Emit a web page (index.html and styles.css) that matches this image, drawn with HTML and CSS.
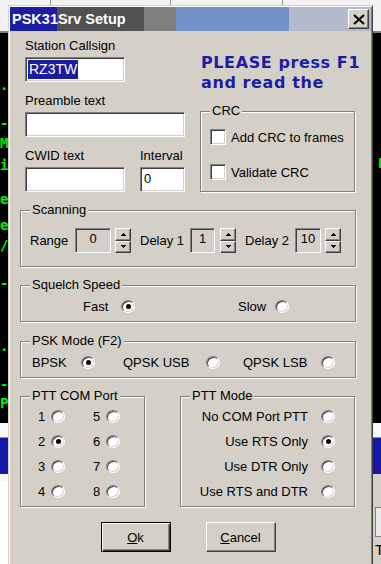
FILE: index.html
```html
<!DOCTYPE html>
<html lang="en">
<head>
  <meta charset="UTF-8">
  <meta name="viewport" content="width=device-width, initial-scale=1.0">
  <title>PSK31Srv Setup</title>
  <link rel="stylesheet" href="styles.css">
</head>
<body>
  <div class="desk">
    <div class="backdrop">
      <div class="toolbar">
        <span class="tool tool-a"></span>
        <span class="tool tool-b"></span>
        <span class="tool tool-c"></span>
      </div>
      <div class="terminal">
        <span class="glyph g1">.</span>
        <span class="glyph g2">-</span>
        <span class="glyph g3">M</span>
        <span class="glyph g4">i</span>
        <span class="glyph g5">e</span>
        <span class="glyph g6">e</span>
        <span class="glyph g7">/</span>
        <span class="glyph g8">-</span>
        <span class="glyph g9">.</span>
        <span class="glyph g10">-</span>
        <span class="glyph g11">P</span>
        <span class="glyph g12">E</span>
      </div>
      <div class="status"></div>
      <div class="band"></div>
      <div class="lower">
        <div class="lower-left"></div>
        <div class="lower-right">
          <div class="lower-box"></div>
          <div class="lower-text">T</div>
        </div>
      </div>
    </div>

    <div class="dialog">
      <div class="titlebar">
        <span class="title">PSK31Srv Setup</span>
        <button class="close-btn">
          <svg width="12" height="11" viewBox="0 0 12 11"><path d="M1 1 L11 10 M11 1 L1 10" stroke="#000" stroke-width="2"/></svg>
        </button>
      </div>

      <div class="dialog-body">
        <div class="top">
          <div class="fields">
            <div class="field">
              <label>Station Callsign</label>
              <div class="edit edit-call"><span class="sel">RZ3TW</span></div>
            </div>
            <div class="field">
              <label>Preamble text</label>
              <div class="edit edit-wide"></div>
            </div>
            <div class="field-row">
              <div class="field">
                <label>CWID text</label>
                <div class="edit edit-call"></div>
              </div>
              <div class="field">
                <label>Interval</label>
                <div class="edit edit-small">0</div>
              </div>
            </div>
          </div>

          <div class="side">
            <div class="notice">PLEASE press F1<br>and read the<br>help file</div>
            <div class="group group-crc">
              <span class="legend">CRC</span>
              <div class="check-row"><span class="checkbox"></span>Add CRC to frames</div>
              <div class="check-row"><span class="checkbox"></span>Validate CRC</div>
            </div>
          </div>
        </div>

        <div class="group group-scan">
          <span class="legend">Scanning</span>
          <div class="scan-row">
            <span class="scan-label scan-range">Range</span>
            <div class="spin-edit spin-edit-wide">0</div>
            <div class="spin">
              <span class="spin-btn"><svg width="5" height="3" viewBox="0 0 5 3"><polygon points="2.5,0 5,3 0,3"/></svg></span>
              <span class="spin-btn"><svg width="5" height="3" viewBox="0 0 5 3"><polygon points="0,0 5,0 2.5,3"/></svg></span>
            </div>
            <span class="scan-label">Delay 1</span>
            <div class="spin-edit">1</div>
            <div class="spin spin-gap">
              <span class="spin-btn"><svg width="5" height="3" viewBox="0 0 5 3"><polygon points="2.5,0 5,3 0,3"/></svg></span>
              <span class="spin-btn"><svg width="5" height="3" viewBox="0 0 5 3"><polygon points="0,0 5,0 2.5,3"/></svg></span>
            </div>
            <span class="scan-label">Delay 2</span>
            <div class="spin-edit spin-edit-mid">10</div>
            <div class="spin">
              <span class="spin-btn"><svg width="5" height="3" viewBox="0 0 5 3"><polygon points="2.5,0 5,3 0,3"/></svg></span>
              <span class="spin-btn"><svg width="5" height="3" viewBox="0 0 5 3"><polygon points="0,0 5,0 2.5,3"/></svg></span>
            </div>
          </div>
        </div>

        <div class="group group-line group-squelch">
          <span class="legend">Squelch Speed</span>
          <div class="opt-row">
            <div class="opt opt-fast">Fast <span class="radio on"></span></div>
            <div class="opt opt-slow">Slow <span class="radio"></span></div>
          </div>
        </div>

        <div class="group group-line group-psk">
          <span class="legend">PSK Mode (F2)</span>
          <div class="opt-row">
            <div class="opt opt-bpsk">BPSK <span class="radio on"></span></div>
            <div class="opt opt-usb">QPSK USB <span class="radio"></span></div>
            <div class="opt opt-lsb">QPSK LSB <span class="radio"></span></div>
          </div>
        </div>

        <div class="ptt">
          <div class="group group-port">
            <span class="legend">PTT COM Port</span>
            <div class="port-grid">
              <div class="opt opt-port">1 <span class="radio"></span></div>
              <div class="opt opt-port">2 <span class="radio on"></span></div>
              <div class="opt opt-port">3 <span class="radio"></span></div>
              <div class="opt opt-port">4 <span class="radio"></span></div>
              <div class="opt opt-port">5 <span class="radio"></span></div>
              <div class="opt opt-port">6 <span class="radio"></span></div>
              <div class="opt opt-port">7 <span class="radio"></span></div>
              <div class="opt opt-port">8 <span class="radio"></span></div>
            </div>
          </div>
          <div class="group group-mode">
            <span class="legend">PTT Mode</span>
            <div class="mode-list">
              <div class="mode-opt">No COM Port PTT <span class="radio"></span></div>
              <div class="mode-opt">Use RTS Only <span class="radio on"></span></div>
              <div class="mode-opt">Use DTR Only <span class="radio"></span></div>
              <div class="mode-opt">Use RTS and DTR <span class="radio"></span></div>
            </div>
          </div>
        </div>

        <div class="buttons">
          <button class="btn btn-default"><u>O</u>k</button>
          <button class="btn"><u>C</u>ancel</button>
        </div>
      </div>
    </div>
  </div>
</body>
</html>
```

FILE: styles.css
```css
* {
  box-sizing: border-box;
}

body {
  margin: 0;
  font-family: "Liberation Sans", Arial, sans-serif;
  font-size: 13px;
  color: #000;
}

.desk {
  position: relative;
  width: 381px;
  height: 564px;
  overflow: hidden;
}

/* the application window behind the dialog */
.backdrop {
  display: flex;
  flex-direction: column;
  height: 100%;
}

.toolbar {
  height: 33px;
  background: #f2f2f2;
  border-bottom: 2px solid #808080;
  display: flex;
  align-items: flex-start;
}

.tool {
  height: 6px;
  border-right: 1px solid #909090;
}

.tool-a { width: 51px; }
.tool-b { width: 120px; }
.tool-c { width: 112px; }

.terminal {
  position: relative;
  height: 390px;
  background: #000;
}

.glyph {
  position: absolute;
  left: 0;
  color: #00f000;
  font: bold 14px/16px "DejaVu Sans Mono", monospace;
}

.g1 { top: 44px; }
.g2 { top: 82px; }
.g3 { top: 102px; }
.g4 { top: 124px; }
.g5 { top: 158px; }
.g6 { top: 184px; }
.g7 { top: 204px; }
.g8 { top: 242px; }
.g9 { top: 305px; }
.g10 { top: 343px; }
.g11 { top: 362px; }
.g12 { top: 122px; left: 378px; }

.status {
  height: 15px;
  background: #f8f8f8;
  border-bottom: 1px solid #909090;
}

.band {
  height: 36px;
  background: #1818a8;
}

.lower {
  flex: 1;
  display: flex;
}

.lower-left {
  width: 8px;
  background: #fff;
  border-top: 8px solid #f8f8f8;
}

.lower-right {
  flex: 1;
  background: #d4d0c8;
  display: flex;
  flex-direction: column;
  align-items: flex-end;
  padding-top: 33px;
}

.lower-box {
  width: 6px;
  height: 30px;
  border: 1px solid #808080;
  border-right: none;
  background: #e8e8e8;
}

.lower-text {
  width: 6px;
  margin-top: 4px;
  font-size: 15px;
}

/* dialog window */
.dialog {
  position: absolute;
  left: 8px;
  top: 5px;
  width: 365px;
  height: 580px;
  padding: 1px;
  background: #d4d0c8;
  border: 1px solid;
  border-color: #d4d0c8 #404040 #404040 #d4d0c8;
  box-shadow: inset 1px 1px #fff, inset -1px -1px #808080;
}

.titlebar {
  height: 24px;
  display: flex;
  align-items: flex-start;
  background: linear-gradient(to right, #1c1ca4 0 47px, #505150 47px 134px, #808080 134px 166px, #7592c8 166px 279px, #b2bacb 279px);
}

.title {
  padding-left: 2px;
  line-height: 24px;
  font-size: 14.5px;
  font-weight: bold;
  color: #fff;
}

.close-btn {
  margin: 2px 2px 0 auto;
  width: 21px;
  height: 20px;
  padding: 0;
  background: #d4d0c8;
  border: 1px solid;
  border-color: #fff #404040 #404040 #fff;
  box-shadow: inset -1px -1px #808080;
  display: flex;
  align-items: center;
  justify-content: center;
}

.dialog-body {
  padding: 0 15px 0 10px;
}

.top {
  display: grid;
  grid-template-columns: 165px 155px;
  column-gap: 15px;
}

.fields {
  padding: 7px 0 0 5px;
}

.fields > .field + .field,
.fields > .field + .field-row {
  margin-top: 11px;
}

.field label {
  display: block;
  line-height: 15px;
  margin-bottom: 4px;
}

.field-row {
  display: flex;
  gap: 15px;
}

.edit {
  height: 25px;
  background: #fff;
  border: 1px solid;
  border-color: #808080 #fff #fff #808080;
  box-shadow: inset 1px 1px #404040, inset -1px -1px #d4d0c8;
  display: flex;
  align-items: center;
  padding: 0 2px;
}

.edit-call { width: 100px; }
.edit-wide { width: 160px; }

.edit-small {
  width: 45px;
  padding: 0 0 3px 3px;
  line-height: 15px;
}

.sel {
  height: 19px;
  line-height: 19px;
  padding: 0 1px;
  background: #1c1ca0;
  color: #fff;
  font-size: 14px;
}

.side {
  padding-top: 22px;
}

.notice {
  height: 43px;
  overflow: hidden;
  margin: 0 -20px 15px 1px;
  white-space: nowrap;
  font: bold 16px/20px "DejaVu Sans", Verdana, sans-serif;
  letter-spacing: 0.6px;
  color: #1c1ca6;
}

/* etched group boxes */
.group {
  position: relative;
  border: 1px solid #808080;
  box-shadow: inset 1px 1px #fff, 1px 1px #fff;
}

.legend {
  position: absolute;
  top: -9px;
  left: 9px;
  padding: 0 2px;
  line-height: 15px;
  background: #d4d0c8;
}

.group-crc {
  height: 81px;
  padding: 17px 9px 0;
}

.check-row {
  height: 16px;
  display: flex;
  align-items: center;
  gap: 5px;
}

.check-row + .check-row {
  margin-top: 19px;
}

.checkbox {
  width: 16px;
  height: 16px;
  background: #fff;
  border: 1px solid;
  border-color: #808080 #fff #fff #808080;
  box-shadow: inset 1px 1px #404040, inset -1px -1px #d4d0c8;
}

.group-scan {
  margin-top: 18px;
  padding: 17px 9px 13px;
}

.scan-row {
  display: flex;
  align-items: center;
  height: 25px;
}

.scan-label {
  width: 50px;
  margin-left: 9px;
}

.scan-range {
  width: 45px;
  margin-left: 0;
}

.spin-edit {
  width: 25px;
  height: 25px;
  padding-top: 2px;
  line-height: 15px;
  text-align: center;
  background: #d4d0c8;
  border: 1px solid;
  border-color: #808080 #fff #fff #808080;
  box-shadow: inset 1px 1px #404040, inset -1px -1px #d4d0c8;
}

.spin-edit-wide { width: 36px; }
.spin-edit-mid { width: 26px; }

.spin {
  width: 16px;
  height: 25px;
  margin-left: 4px;
  display: flex;
  flex-direction: column;
}

.spin-gap {
  margin-left: 5px;
}

.spin-btn {
  flex: 1;
  display: flex;
  align-items: center;
  justify-content: center;
  background: #d4d0c8;
  border: 1px solid;
  border-color: #fff #404040 #404040 #fff;
  box-shadow: inset -1px -1px #808080;
}

.spin-btn svg {
  shape-rendering: crispEdges;
}

/* radio rows */
.group-line {
  height: 37px;
  padding: 13px 9px 0;
}

.group-squelch {
  margin-top: 18px;
}

.group-psk {
  margin-top: 19px;
}

.opt-row {
  display: flex;
  height: 14px;
  align-items: center;
}

.opt {
  display: flex;
  align-items: center;
  justify-content: space-between;
  line-height: 15px;
}

.opt-fast { margin-left: 53px; width: 52px; }
.opt-slow { margin-left: 103px; width: 51px; }
.opt-bpsk { margin-left: 2px; width: 63px; }
.opt-usb { margin-left: 28px; width: 97px; }
.opt-lsb { margin-left: 23px; width: 92px; }

.radio {
  flex: none;
  width: 14px;
  height: 13px;
  border-radius: 50%;
  background: #fff;
  border: 1px solid;
  border-color: #808080 #fff #fff #808080;
  box-shadow: inset 1px 1px #404040, inset -1px -1px #d4d0c8;
  display: flex;
  align-items: center;
  justify-content: center;
}

.radio.on::after {
  content: "";
  width: 5px;
  height: 5px;
  border-radius: 50%;
  background: #000;
}

.ptt {
  margin-top: 18px;
  display: flex;
  gap: 35px;
}

.group-port {
  width: 125px;
  height: 111px;
  padding: 7px 0 0 17px;
}

.port-grid {
  display: grid;
  grid-template-columns: 27px 27px;
  grid-template-rows: repeat(4, 25px);
  grid-auto-flow: column;
  column-gap: 28px;
}

.opt-port {
  width: 27px;
}

.group-mode {
  width: 175px;
  height: 111px;
  padding: 7px 19px 0 0;
}

.mode-opt {
  height: 25px;
  display: flex;
  align-items: center;
  justify-content: flex-end;
  gap: 13px;
}

.buttons {
  margin-top: 15px;
  display: flex;
  justify-content: center;
  gap: 35px;
}

.btn {
  width: 70px;
  height: 30px;
  padding: 0;
  font: 13px "Liberation Sans", Arial, sans-serif;
  color: #000;
  background: #d4d0c8;
  border: 1px solid;
  border-color: #fff #404040 #404040 #fff;
  box-shadow: inset -1px -1px #808080;
}

.btn-default {
  border-color: #000;
  box-shadow: inset 1px 1px #fff, inset -1px -1px #404040, inset -2px -2px #808080;
}
```
